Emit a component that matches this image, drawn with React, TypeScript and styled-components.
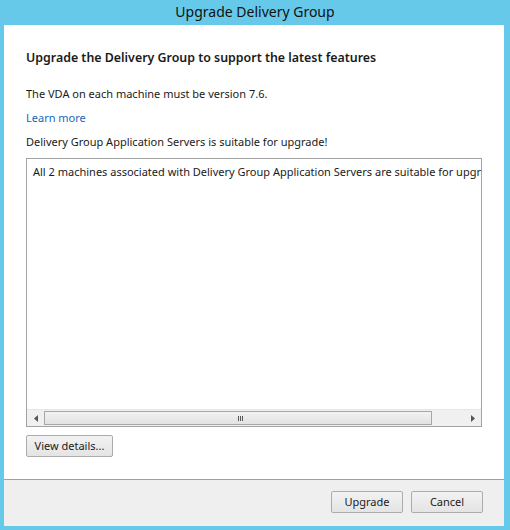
import React from "react";
import styled, { createGlobalStyle } from "styled-components";

const Global = createGlobalStyle`
  html, body { margin: 0; padding: 0; }
  body { font-family: "Noto Sans", "Open Sans", sans-serif; }
`;

const Window = styled.div`
  width: 510px;
  height: 530px;
  background: #66c9ea;
  display: flex;
  flex-direction: column;
  box-sizing: border-box;
  padding: 0 6px 4px 4px;
`;

const TitleBar = styled.div`
  height: 25px;
  display: flex;
  align-items: center;
  justify-content: center;
  font-size: 14px;
  color: #111;
  padding-left: 2px;
  padding-bottom: 2px;
  box-sizing: border-box;
`;

const Client = styled.div`
  flex: 1;
  display: flex;
  flex-direction: column;
  background: #fff;
`;

const Body = styled.div`
  flex: 1;
  padding: 0 21px 0 22px;
  display: flex;
  flex-direction: column;
  font-size: 11px;
  color: #1a1a1a;
`;

const Heading = styled.div`
  font-weight: 600;
  font-size: 12.4px;
  line-height: 16px;
  margin-top: 25px;
`;

const Line = styled.div<{ $mt: number }>`
  line-height: 16px;
  margin-top: ${(p) => p.$mt}px;
`;

const Link = styled.a`
  color: #1a66b8;
  text-decoration: none;
  line-height: 16px;
  margin-top: 8px;
  display: block;
`;

const TextBox = styled.div`
  margin-top: 8px;
  width: 456px;
  height: 269px;
  border: 1px solid #a3a3a3;
  box-sizing: border-box;
  display: flex;
  flex-direction: column;
  overflow: hidden;
`;

const TextArea = styled.div`
  flex: 1;
  padding: 5px 6px;
  line-height: 16px;
  white-space: nowrap;
  overflow: hidden;
`;

const HScroll = styled.div`
  height: 17px;
  display: flex;
  background: #f0f0f0;
  border-top: 1px solid #e6e6e6;
  box-sizing: border-box;
`;

const ArrowBtn = styled.div`
  width: 17px;
  display: flex;
  align-items: center;
  justify-content: center;
`;

const Track = styled.div`
  flex: 1;
  display: flex;
  padding: 1px 0;
`;

const Thumb = styled.div`
  width: 388px;
  border: 1px solid #a7a7a7;
  background: linear-gradient(#f2f2f2, #e2e2e2);
  display: flex;
  align-items: center;
  justify-content: center;
  box-sizing: border-box;
`;

const Grip = styled.div`
  width: 6px;
  height: 5px;
  background: repeating-linear-gradient(90deg, #555 0 1px, transparent 1px 2px);
  margin-left: 6px;
`;

const Button = styled.button<{ $w: number }>`
  width: ${(p) => p.$w}px;
  height: 22px;
  border: 1px solid #acacac;
  border-radius: 2px;
  background: linear-gradient(#f2f2f2, #e4e4e4);
  font-family: "Noto Sans", "Open Sans", sans-serif;
  font-size: 11px;
  color: #1a1a1a;
  padding: 0 0 1px;
  box-sizing: border-box;
`;

const DetailsRow = styled.div`
  margin-top: 8px;
  display: flex;
`;

const Footer = styled.div`
  height: 47px;
  border-top: 1px solid #a0a0a0;
  background: #efefef;
  display: flex;
  justify-content: flex-end;
  align-items: flex-start;
  gap: 8px;
  padding: 11px 21px 0 0;
  box-sizing: border-box;
`;

export default function App() {
  return (
    <>
      <Global />
      <Window>
        <TitleBar>Upgrade Delivery Group</TitleBar>
        <Client>
          <Body>
            <Heading>Upgrade the Delivery Group to support the latest features</Heading>
            <Line $mt={20}>The VDA on each machine must be version 7.6.</Line>
            <Link href="#">Learn more</Link>
            <Line $mt={8}>Delivery Group Application Servers is suitable for upgrade!</Line>
            <TextBox>
              <TextArea>
                All 2 machines associated with Delivery Group Application Servers are suitable for upgrade.
              </TextArea>
              <HScroll>
                <ArrowBtn>
                  <svg width="4" height="7" viewBox="0 0 4 7">
                    <path d="M4 0 L0 3.5 L4 7 Z" fill="#555" />
                  </svg>
                </ArrowBtn>
                <Track>
                  <Thumb>
                    <Grip />
                  </Thumb>
                </Track>
                <ArrowBtn>
                  <svg width="4" height="7" viewBox="0 0 4 7">
                    <path d="M0 0 L4 3.5 L0 7 Z" fill="#555" />
                  </svg>
                </ArrowBtn>
              </HScroll>
            </TextBox>
            <DetailsRow>
              <Button $w={87}>View details...</Button>
            </DetailsRow>
          </Body>
          <Footer>
            <Button $w={72}>Upgrade</Button>
            <Button $w={72}>Cancel</Button>
          </Footer>
        </Client>
      </Window>
    </>
  );
}
